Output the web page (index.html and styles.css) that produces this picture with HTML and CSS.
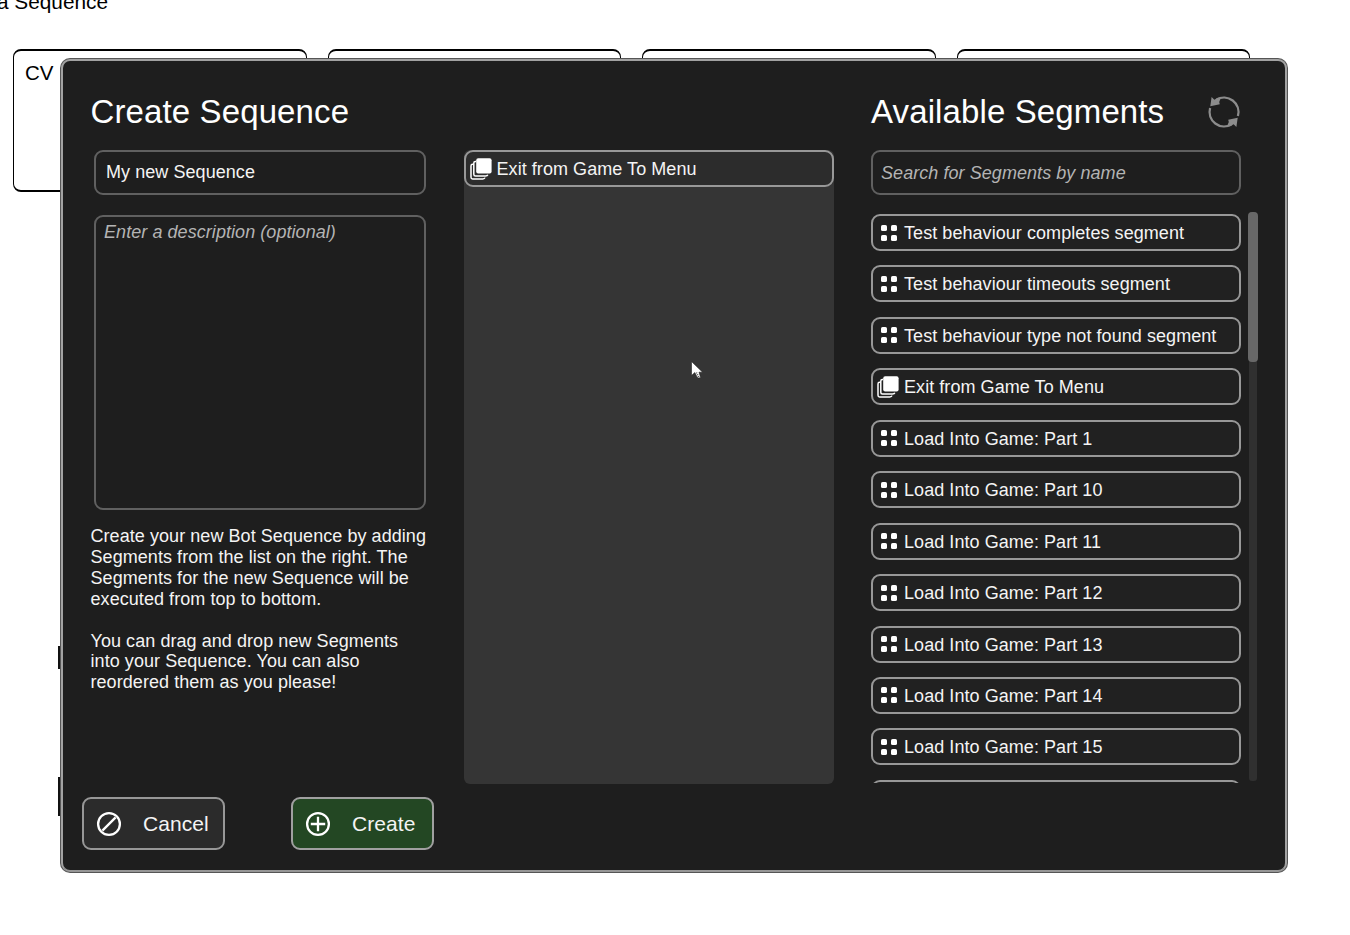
FILE: index.html
```
<!DOCTYPE html>
<html lang="en">
<head>
<meta charset="utf-8">
<title>Create Sequence</title>
<link rel="stylesheet" href="styles.css">
</head>
<body>
<svg class="defs" width="0" height="0">
  <symbol id="dots" viewBox="0 0 18 18">
    <g fill="#fff"><rect x="1" y="1" width="6" height="6" rx="1.6"/><rect x="11" y="1" width="6" height="6" rx="1.6"/><rect x="1" y="11" width="6" height="6" rx="1.6"/><rect x="11" y="11" width="6" height="6" rx="1.6"/></g>
  </symbol>
  <symbol id="stack" viewBox="0 0 22 22">
    <path d="M3.6 6.3H2.6Q1 6.3 1 7.9V19.2Q1 20.9 2.6 20.9H12.8Q14.6 20.9 15 19.6" fill="none" stroke="#fff" stroke-width="1.5"/>
    <path d="M6 3.4H5.4Q3.8 3.4 3.8 5V16.3Q3.8 18.1 5.4 18.1H15.6Q17.4 18.1 17.8 16.8" fill="none" stroke="#fff" stroke-width="1.5"/>
    <rect x="6.2" y=".2" width="15.4" height="15.4" rx="2" fill="#fff"/>
  </symbol>
</svg>
<main class="page">
  <div class="page-title">a Sequence</div>
  <div class="cards">
    <div class="card">CV</div><div class="card"></div><div class="card"></div><div class="card"></div>
  </div>
  <i class="sliver sliver-a"></i><i class="sliver sliver-b"></i>

  <section class="dialog">
    <div class="columns">
      <div class="details">
        <h1>Create Sequence</h1>
        <div class="field name">My new Sequence</div>
        <div class="field description">Enter a description (optional)</div>
        <p class="help">Create your new Bot Sequence by adding<br>Segments from the list on the right. The<br>Segments for the new Sequence will be<br>executed from top to bottom.<br><br>You can drag and drop new Segments<br>into your Sequence. You can also<br>reordered them as you please!</p>
      </div>
      <div class="dropzone">
        <div class="row picked"><svg class="stack"><use href="#stack"/></svg><span>Exit from Game To Menu</span></div>
      </div>
      <div class="available">
        <header><h1>Available Segments</h1>
          <svg class="refresh" viewBox="0 0 34 34"><g fill="none" stroke="#8c8c8c" stroke-width="2.3"><path d="M9.4 4.7A14.5 14.5 0 0 1 30.9 21"/><path d="M24.6 29.3A14.5 14.5 0 0 1 3.1 13"/></g><path fill="#8c8c8c" d="M4.6 2L3.3 11.2L12.8 9.2L12.2 7L13.4 4L11.2 2.4L7.4 4.8ZM29.4 32L30.7 22.8L21.2 24.8L21.8 27L20.6 30L22.8 31.6L26.6 29.2Z"/></svg>
        </header>
        <div class="field search">Search for Segments by name</div>
        <div class="listing">
          <div class="list">
            <div class="row"><svg class="dots"><use href="#dots"/></svg><span>Test behaviour completes segment</span></div>
            <div class="row"><svg class="dots"><use href="#dots"/></svg><span>Test behaviour timeouts segment</span></div>
            <div class="row"><svg class="dots"><use href="#dots"/></svg><span>Test behaviour type not found segment</span></div>
            <div class="row"><svg class="stack"><use href="#stack"/></svg><span>Exit from Game To Menu</span></div>
            <div class="row"><svg class="dots"><use href="#dots"/></svg><span>Load Into Game: Part 1</span></div>
            <div class="row"><svg class="dots"><use href="#dots"/></svg><span>Load Into Game: Part 10</span></div>
            <div class="row"><svg class="dots"><use href="#dots"/></svg><span>Load Into Game: Part 11</span></div>
            <div class="row"><svg class="dots"><use href="#dots"/></svg><span>Load Into Game: Part 12</span></div>
            <div class="row"><svg class="dots"><use href="#dots"/></svg><span>Load Into Game: Part 13</span></div>
            <div class="row"><svg class="dots"><use href="#dots"/></svg><span>Load Into Game: Part 14</span></div>
            <div class="row"><svg class="dots"><use href="#dots"/></svg><span>Load Into Game: Part 15</span></div>
            <div class="row"></div>
          </div>
          <div class="track"><div class="thumb"></div></div>
        </div>
      </div>
    </div>
    <footer>
      <div class="button"><svg viewBox="0 0 26 26"><g fill="none" stroke="#fff" stroke-width="2.3"><circle cx="13" cy="13" r="10.9"/><path d="M6.4 19.6L19.6 6.4"/></g></svg><span>Cancel</span></div>
      <div class="button create"><svg viewBox="0 0 26 26"><g fill="none" stroke="#fff" stroke-width="2.3"><circle cx="13" cy="13" r="10.9"/><path d="M13 5.8V20.2M5.8 13H20.2"/></g></svg><span>Create</span></div>
    </footer>
  </section>
  <svg class="cursor" viewBox="0 0 12 18"><path d="M.5.5V14.5L3.8 11.6L5.8 15.6Q7 18 9.6 16.4L8 11.2H11.6Z" fill="#fff" stroke="#222" stroke-width=".6"/><path d="M5.4 11.5L7.8 15.8" stroke="#555" stroke-width="1.4" stroke-dasharray="1 1"/></svg>
</main>
</body>
</html>
```
FILE: styles.css
```
* { box-sizing: border-box; }
body { margin: 0; background: #fff; font-family: "Liberation Sans", Arial, sans-serif; }
.defs { position: absolute; }
.page { position: relative; width: 1350px; height: 935px; overflow: hidden; }
.page-title { height: 49px; margin-left: -3px; font-size: 20.8px; line-height: 4px; color: #000; white-space: nowrap; }
.cards { display: flex; gap: 21px; padding-left: 13px; }
.card { width: 293.5px; height: 143px; flex: none; border: 1px solid #000; border-top-width: 2px; border-bottom-width: 2px; border-radius: 8px; padding: 10px 11px; font-size: 20.5px; line-height: 24px; color: #000; }
.sliver { position: absolute; left: 58px; width: 3px; background: #111; }
.sliver-a { top: 646px; height: 23px; }
.sliver-b { top: 777px; height: 39px; }

.dialog { position: absolute; left: 61px; top: 59px; width: 1226px; height: 813px; border: 2px solid #a2a2a2; border-bottom-color: #969696; border-radius: 9px; background: #1e1e1e; color: #f4f4f4; box-shadow: 0 0 0 1px #555; font-size: 18px; letter-spacing: .06px; }
.columns { display: flex; height: 736px; padding: 29px 0 0 28px; }
.details { flex: none; width: 335px; margin-right: 38px; }
h1 { margin: 0; height: 60px; font-size: 33px; font-weight: 400; line-height: 43px; color: #fff; letter-spacing: .12px; white-space: nowrap; }
.details h1 { margin-left: -.5px; }
.field { border: 2px solid #606060; border-radius: 9px; }
.name { margin: 0 0 0 3px; height: 45px; padding: 0 10px; line-height: 41px; }
.description { margin: 20px 0 0 3px; height: 295px; padding: 5px 8px; line-height: 21px; font-style: italic; color: #b4b4b4; }
.help { margin: 16px -10px 0 -.5px; line-height: 20.9px; white-space: nowrap; }
.dropzone { flex: none; width: 370px; height: 634px; margin: 60px 37px 0 0; background: #353535; border-radius: 6px; }
.row { display: flex; align-items: center; flex: none; height: 37px; border: 2px solid #989898; border-radius: 9px; background: #212121; padding-left: 7px; white-space: nowrap; }
.row.picked { background: #2c2c2c; }
.row span { line-height: 21px; padding-top: 2px; }
.dots { width: 18px; height: 18px; margin-right: 6px; }
.stack { width: 22px; height: 22px; margin: 0 5px 0 -3px; }
.picked .stack { margin-right: 4.5px; }
.available { flex: none; width: 388px; }
.available header { display: flex; justify-content: space-between; height: 60px; padding-right: 18.5px; }
.refresh { width: 34px; height: 34px; margin-top: 5px; }
.search { width: 370px; height: 45px; padding-left: 8px; line-height: 42px; font-style: italic; color: #b4b4b4; }
.listing { display: flex; justify-content: space-between; height: 571px; margin-top: 17px; }
.list { display: flex; flex-direction: column; gap: 14.45px; width: 370px; height: 571px; padding-top: 2px; overflow: hidden; }
.track { width: 8px; height: 569px; margin-right: 2px; background: #303030; border-radius: 3px; }
.thumb { width: 10px; height: 150px; margin-left: -1px; border-radius: 4px; background: #686868; }
footer { display: flex; gap: 66px; padding-left: 19px; }
.button { display: flex; align-items: center; width: 143px; height: 53px; border: 2px solid #979797; border-radius: 9px; background: #2b2b2b; padding-left: 12px; font-size: 21px; }
.button svg { width: 26px; height: 26px; margin-right: 21px; }
.button.create { background: #234723; border-color: #a0a0a0; }
.cursor { position: absolute; left: 691px; top: 361px; width: 12px; height: 18px; }
```
